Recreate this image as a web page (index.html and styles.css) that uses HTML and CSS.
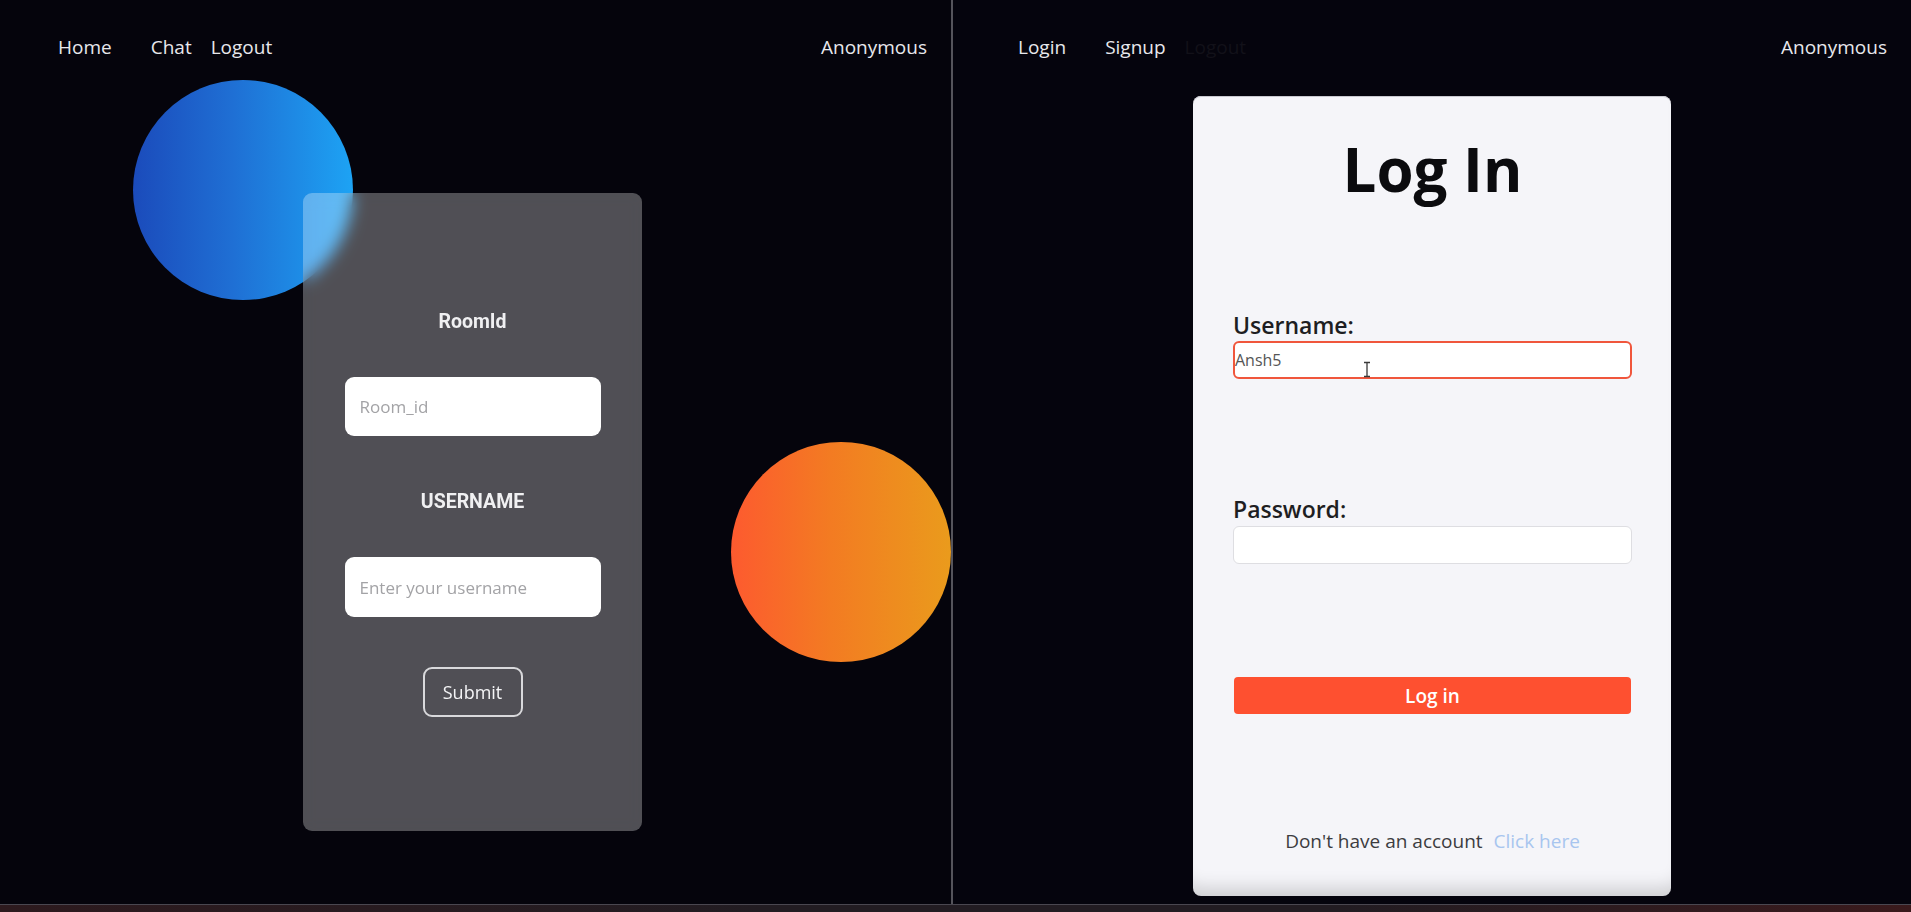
FILE: index.html
```html
<!DOCTYPE html>
<html lang="en">
<head>
<meta charset="utf-8">
<title>Chat - Login</title>
<link rel="stylesheet" href="styles.css">
</head>
<body>
<div class="screen">
  <div class="panels">
    <section class="panel panel-left">
      <div class="blob blob-blue"></div>
      <div class="blob blob-orange"></div>
      <nav class="nav">
        <div class="nav-links">
          <a class="nav-link first">Home</a>
          <a class="nav-link">Chat</a>
          <a class="nav-link">Logout</a>
        </div>
        <span class="nav-user">Anonymous</span>
      </nav>
      <form class="join-card">
        <label class="join-label">RoomId</label>
        <input class="join-input" type="text" placeholder="Room_id">
        <label class="join-label join-label-user">USERNAME</label>
        <input class="join-input join-input-user" type="text" placeholder="Enter your username">
        <button class="join-submit" type="button">Submit</button>
      </form>
    </section>
    <div class="divider"></div>
    <section class="panel panel-right">
      <nav class="nav nav-right">
        <div class="nav-links">
          <a class="nav-link first">Login</a>
          <a class="nav-link">Signup</a>
          <a class="nav-link faint">Logout</a>
        </div>
        <span class="nav-user">Anonymous</span>
      </nav>
      <form class="login-card">
        <h1 class="login-title">Log In</h1>
        <label class="login-label login-label-user">Username:</label>
        <input class="login-input login-input-active" type="text" value="Ansh5">
        <label class="login-label login-label-pass">Password:</label>
        <input class="login-input" type="password">
        <button class="login-button" type="button">Log in</button>
        <p class="login-footer">Don't have an account <a class="login-link">Click here</a></p>
        <svg class="ibeam" width="8" height="17" viewBox="0 0 8 17"><path d="M1 1.5h6M4 1.5v14M1 15.5h6" stroke="#3a3a3a" stroke-width="1.3" fill="none"/></svg>
      </form>
    </section>
  </div>
  <div class="taskbar"></div>
</div>
</body>
</html>
```

FILE: styles.css
```css
* { box-sizing: border-box; }

html, body {
  margin: 0;
  padding: 0;
  background: #05040c;
  font-family: "Open Sans", "Noto Sans", "Liberation Sans", sans-serif;
}

.screen {
  width: 1911px;
  height: 912px;
  display: flex;
  flex-direction: column;
  overflow: hidden;
}

.panels {
  display: flex;
  height: 904px;
}

.panel {
  position: relative;
  height: 100%;
  background: #05040c;
}

.panel-left {
  width: 951px;
  overflow: hidden;
}

.divider {
  width: 2px;
  height: 100%;
  background: #55545b;
}

.panel-right {
  flex: 1;
  background: #05040d;
}

/* nav */
.nav {
  position: relative;
  z-index: 2;
  display: flex;
  justify-content: space-between;
  align-items: center;
  height: 59px;
  padding: 35px 24px 0 58px;
}

.nav-right {
  padding-left: 65px;
}

.nav-links {
  display: flex;
}

.nav-link,
.nav-user {
  font-size: 19px;
  line-height: 24px;
  color: #e8e8ec;
  text-decoration: none;
}

.nav-link {
  margin-right: 19px;
}

.nav-link.first {
  margin-right: 39px;
}

.nav-link.faint {
  color: #121119;
}

/* blobs */
.blob {
  position: absolute;
  z-index: 0;
  width: 220px;
  height: 220px;
  border-radius: 50%;
}

.blob-blue {
  left: 133px;
  top: 80px;
  background: linear-gradient(to right, #1b4bbb, #1f6fd4 45%, #1e86e2 70%, #1da3f4);
}

.blob-orange {
  left: 731px;
  top: 442px;
  background: linear-gradient(to right, #fd5a2f, #f37b22 45%, #ea9b1c);
}

/* join card */
.join-card {
  position: relative;
  z-index: 1;
  width: 339px;
  height: 638px;
  margin: 134px 0 0 303px;
  padding-top: 119px;
  display: flex;
  flex-direction: column;
  align-items: center;
  border-radius: 9px;
  background: rgba(255, 255, 255, 0.3);
  backdrop-filter: blur(8px);
  -webkit-backdrop-filter: blur(8px);
}

.join-label {
  font-family: Roboto, "Liberation Sans", sans-serif;
  font-weight: 700;
  font-size: 19.5px;
  line-height: 20px;
  color: #f0f0f2;
}

.join-label-user {
  margin-top: 56px;
}

.join-input {
  margin-top: 45px;
  width: 256px;
  height: 59px;
  border: none;
  border-radius: 9px;
  background: #ffffff;
  padding: 0 15px;
  font-family: "Open Sans", "Noto Sans", sans-serif;
  font-size: 17px;
  color: #333;
  outline: none;
}

.join-input-user {
  height: 60px;
}

.join-input::placeholder {
  color: #a3a3a6;
}

.join-submit {
  margin-top: 50px;
  width: 100px;
  height: 50px;
  border: 2px solid #d9d9dc;
  border-radius: 9px;
  background: transparent;
  color: #f4f4f6;
  font-family: "Open Sans", "Noto Sans", sans-serif;
  font-size: 18px;
  padding: 0;
}

/* login card */
.login-card {
  position: relative;
  display: flex;
  flex-direction: column;
  width: 478px;
  height: 800px;
  margin: 37px auto 0;
  padding: 37px 39px 0 40px;
  background: #f5f5f9;
  border-radius: 8px;
  box-shadow: inset 0 -22px 18px -14px rgba(0, 0, 0, 0.16), inset 0 1px 0 #c9c9d0;
}

.login-title {
  margin: 0;
  text-align: center;
  font-weight: 700;
  font-size: 60px;
  line-height: 72px;
  color: #0b0b0e;
}

.login-label {
  display: block;
  font-weight: 600;
  font-size: 23px;
  line-height: 28px;
  color: #1e1e22;
}

.login-label-user {
  margin-top: 106px;
}

.login-label-pass {
  margin-top: 116px;
}

.login-input {
  width: 399px;
  height: 38px;
  margin-top: 3px;
  border: 1px solid #dedee2;
  border-radius: 6px;
  background: #ffffff;
  padding: 0;
  font-family: "Open Sans", "Noto Sans", sans-serif;
  font-size: 16px;
  color: #555;
  outline: none;
}

.login-input-active {
  margin-top: 2px;
  border: 2px solid #f0563c;
}

.login-button {
  margin: 113px 0 0 1px;
  width: 397px;
  height: 37px;
  border: none;
  border-radius: 4px;
  background: #fe5030;
  color: #ffffff;
  font-family: "Open Sans", "Noto Sans", sans-serif;
  font-weight: 600;
  font-size: 19px;
  padding: 0;
}

.login-footer {
  margin: 115px 0 0;
  text-align: center;
  font-size: 19px;
  line-height: 24px;
  color: #3c3c40;
}

.login-link {
  margin-left: 6px;
  color: #a8c5ef;
}

.ibeam {
  position: absolute;
  left: 170px;
  top: 265px;
}

/* bottom strip */
.taskbar {
  height: 8px;
  border-top: 1px solid #4a4750;
  background: linear-gradient(to right, #2d1a1e, #221c22 40%, #221c22 70%, #3a1a1c);
}
```
